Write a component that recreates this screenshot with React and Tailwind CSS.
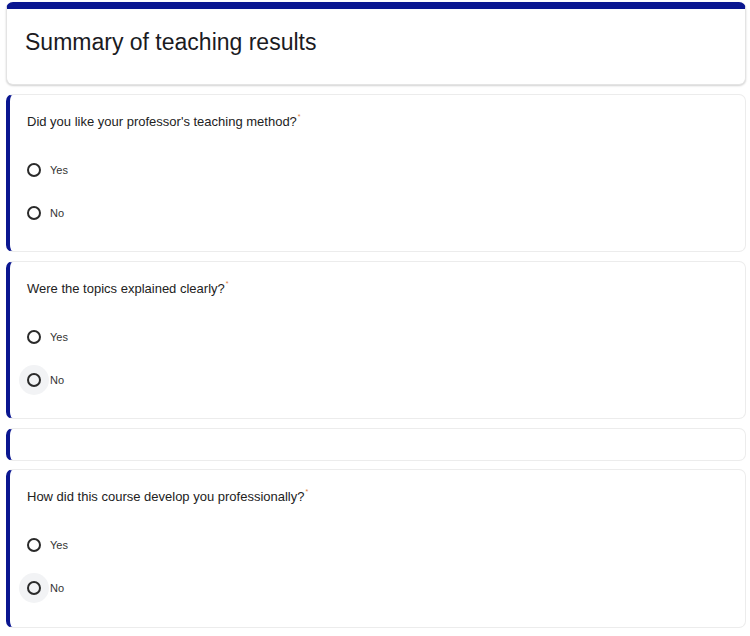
import React from "react";

function Radio({ label, halo }) {
  return (
    <div className="flex items-center h-[30px]">
      <div className={`ml-[-8px] w-[30px] h-[30px] rounded-full flex items-center justify-center ${halo ? "bg-[#f2f3f5]" : ""}`}>
        <div className="w-[14px] h-[14px] rounded-full border-2 border-[#2a2a2a]" />
      </div>
      <span className="ml-[1px] text-[11px] text-[#333]">{label}</span>
    </div>
  );
}

function Question({ text, haloNo, h }) {
  return (
    <div className={`bg-white border border-[#ececec] border-l-[4px] border-l-[#0a1690] rounded-[7px] pl-[17px] pt-[18px] ${h}`}>
      <div className="text-[13px] leading-[17px] text-[#222]">
        {text}
        <span className="relative top-[-7px] ml-[1px] text-[7px] text-[#e07a3a]">*</span>
      </div>
      <div className="mt-[23px] flex flex-col gap-[13px]">
        <Radio label="Yes" />
        <Radio label="No" halo={haloNo} />
      </div>
    </div>
  );
}

export default function App() {
  return (
    <div className="w-[750px] h-[636px] bg-white pl-[6px] pr-[4px] pt-[2px] flex flex-col gap-[9px]" style={{ fontFamily: '"Liberation Sans", Arial, sans-serif' }}>
      <div className="h-[83px] rounded-[7px] bg-white border border-[#e4e4e4] border-t-[7px] border-t-[#0a1690] shadow-[0_1px_2px_rgba(0,0,0,0.18)] pl-[18px] pt-[19px]">
        <div className="text-[23px] leading-[28px] text-[#1b1b1f]">Summary of teaching results</div>
      </div>
      <Question text="Did you like your professor's teaching method?" h="h-[158px]" />
      <Question text="Were the topics explained clearly?" haloNo h="h-[158px]" />
      <div className="h-[33px] bg-white border border-[#ececec] border-l-[4px] border-l-[#0a1690] rounded-[7px]" />
      <div className="-mt-[1px]">
        <Question text="How did this course develop you professionally?" haloNo h="h-[159px]" />
      </div>
    </div>
  );
}
